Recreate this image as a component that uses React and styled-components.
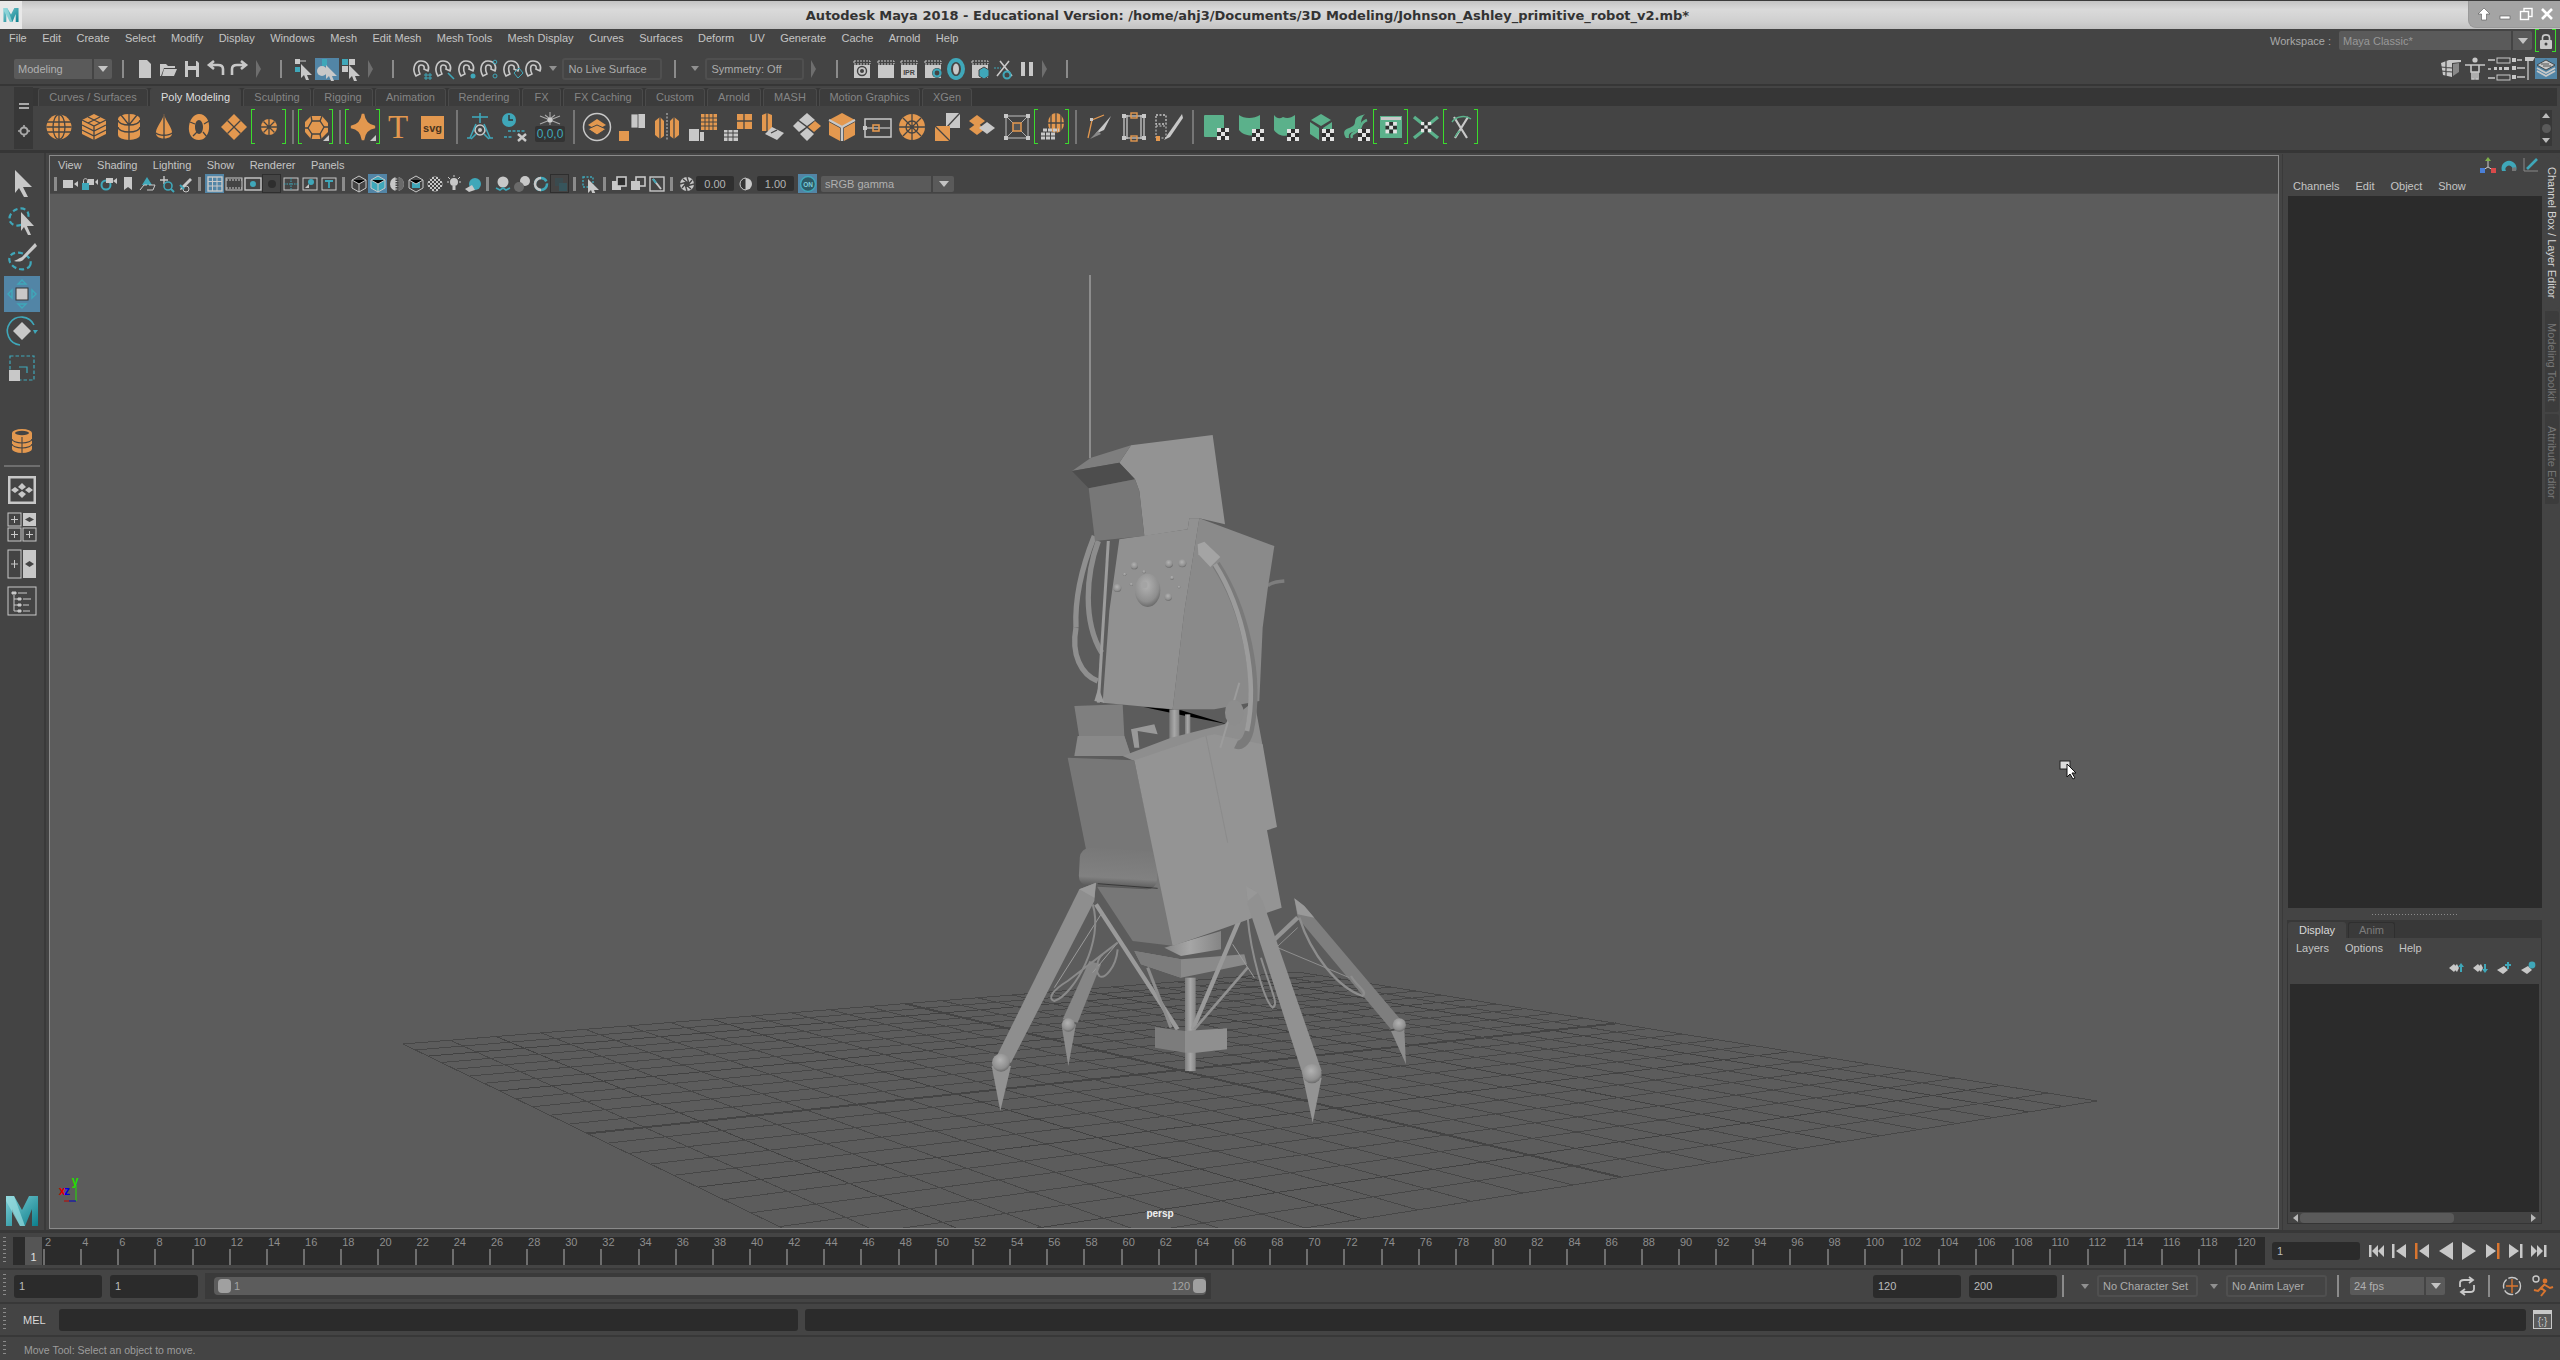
import React from 'react';
import styled, { createGlobalStyle } from 'styled-components';

const O = '#e3984f';
const W = '#c8c8c8';
const T = '#3fa7b9';
const G = '#5bb18b';
const D = '#444444';

const Global = createGlobalStyle`
  html, body { margin: 0; padding: 0; background: #444; }
  body { font-family: "Liberation Sans", Arial, sans-serif; font-size: 11px; color: #bdbdbd; }
  #root { width: 2560px; height: 1360px; overflow: hidden; }
`;

const Page = styled.div`
  width: 2560px;
  height: 1360px;
  display: flex;
  flex-direction: column;
  background: #444;
  overflow: hidden;
`;

/* title bar */
const TitleBar = styled.div`
  height: 28px;
  flex: none;
  border-top: 1px solid #3c3c3c;
  display: flex;
  align-items: center;
  justify-content: center;
  position: relative;
  background: linear-gradient(#c4c4c4, #dadada 30%, #cfcfcf 75%, #c2c2c2);
`;
const TitleText = styled.div`
  font-family: "DejaVu Sans", sans-serif;
  font-weight: bold;
  font-size: 13px;
  color: #333;
  margin-right: 65px;
`;
const AppLogo = styled.div`
  position: absolute;
  left: 0;
  top: 0;
  width: 22px;
  height: 28px;
  background: #e8e8e8;
  display: flex;
  align-items: center;
  justify-content: center;
`;
const WindowButtons = styled.div`
  position: absolute;
  right: 0;
  top: 0;
  height: 27px;
  width: 92px;
  display: flex;
  align-items: center;
  justify-content: space-around;
  padding: 0 2px 0 4px;
  box-sizing: border-box;
  border-left: 1px solid #999;
  border-bottom: 1px solid #999;
  border-bottom-left-radius: 8px;
  background: #a4a4a4;
`;

/* menu bar */
const MenuBar = styled.div`
  height: 21px;
  flex: none;
  box-sizing: border-box;
  padding: 0 0 3px 9px;
  display: flex;
  align-items: center;
`;
const MenuItem = styled.span`
  color: #c4c4c4;
  margin-right: ${p => p.$gap ?? 15.4}px;
  white-space: nowrap;
`;
const WorkspaceBox = styled.div`
  margin-left: auto;
  margin-right: 4px;
  padding-top: 5px;
  display: flex;
  align-items: center;
`;
const WorkspaceLabel = styled.span`
  font-size: 11px;
  color: #a8a8a8;
  margin-right: 8px;
`;

const Drop = styled.div`
  display: flex;
  width: ${p => p.$w}px;
  height: ${p => p.$h ?? 18}px;
  margin-left: ${p => p.$ml ?? 0}px;
  gap: 2px;
  flex: none;
`;
const DropText = styled.div`
  flex: 1;
  background: #5a5a5a;
  border-radius: 2px 0 0 2px;
  color: ${p => p.$c ?? '#b0b0b0'};
  font-size: 11px;
  display: flex;
  align-items: center;
  padding-left: 4px;
  overflow: hidden;
  white-space: nowrap;
`;
const DropArrow = styled.div`
  width: ${p => p.$w ?? 19}px;
  background: #5a5a5a;
  border-radius: 0 2px 2px 0;
  display: flex;
  align-items: center;
  justify-content: center;
  &::after {
    content: '';
    border-left: 5px solid transparent;
    border-right: 5px solid transparent;
    border-top: 6px solid #c4c4c4;
  }
`;

/* status line */
const StatusLine = styled.div`
  flex: none;
  padding: 3px 0 0 14px;
  display: flex;
  align-items: center;
  border-bottom: 2px solid #363636;
  box-sizing: border-box;
  height: 36px;
`;
const Sep = styled.div`
  flex: none;
  width: ${p => p.$w ?? 2}px;
  height: ${p => p.$h ?? 18}px;
  background: #8b8b8b;
  margin-left: ${p => p.$ml ?? 0}px;
  margin-right: ${p => p.$mr ?? 0}px;
`;
const Group = styled.div`
  display: flex;
  align-items: center;
  flex: none;
  margin-left: ${p => p.$ml ?? 0}px;
`;
const Slot = styled.div`
  flex: none;
  width: ${p => p.$w}px;
  height: ${p => p.$h ?? p.$w}px;
  margin-left: ${p => p.$ml ?? 0}px;
  display: flex;
  align-items: center;
  justify-content: center;
  background: ${p => (p.$on ? '#5285a6' : 'transparent')};
  box-shadow: ${p => (p.$sunken ? 'inset 0 0 0 1px #2e2e2e' : 'none')};
`;
const Collapse = styled.div`
  flex: none;
  margin-left: ${p => p.$ml}px;
  width: 0;
  height: 0;
  border-top: 9px solid transparent;
  border-bottom: 9px solid transparent;
  border-left: 5px solid #6e6e6e;
`;
const TinyDown = styled.div`
  flex: none;
  margin-left: ${p => p.$ml}px;
  width: 0;
  height: 0;
  border-left: 4px solid transparent;
  border-right: 4px solid transparent;
  border-top: 5px solid #909090;
`;
const OutlineBox = styled.div`
  flex: none;
  box-sizing: border-box;
  margin-left: ${p => p.$ml}px;
  width: ${p => p.$w}px;
  height: ${p => p.$h ?? 22}px;
  border: 2px solid #4f4f4f;
  border-radius: 3px;
  display: flex;
  align-items: center;
  padding-left: 4px;
  color: #acacac;
  white-space: nowrap;
  overflow: hidden;
`;
const RightIcons = styled.div`
  margin-left: auto;
  margin-right: 3px;
  display: flex;
  align-items: center;
  gap: 1px;
`;

/* shelf */
const ShelfArea = styled.div`
  height: 67px;
  flex: none;
  display: flex;
  border-bottom: 3px solid #363636;
  box-sizing: border-box;
  padding: 1px 3px 0 14px;
  position: relative;
`;
const ShelfSide = styled.div`
  width: 19px;
  height: 62px;
  background: #383838;
  display: flex;
  flex-direction: column;
  align-items: center;
  justify-content: space-around;
  padding: 6px 0;
  box-sizing: border-box;
  flex: none;
`;
const ShelfMain = styled.div`
  flex: 1;
  display: flex;
  flex-direction: column;
  min-width: 0;
`;
const TabStrip = styled.div`
  height: 18px;
  margin-top: 1px;
  background: #363636;
  display: flex;
  padding-left: 5px;
  align-items: flex-end;
`;
const ShelfTab = styled.div`
  box-sizing: border-box;
  width: ${p => p.$w}px;
  height: 18px;
  margin-right: 2px;
  border-radius: 3px 3px 0 0;
  background: ${p => (p.$on ? '#444' : '#3c3c3c')};
  border: 1px solid ${p => (p.$on ? '#444' : '#4a4a4a')};
  border-bottom: 0;
  color: ${p => (p.$on ? '#dedede' : '#858585')};
  font-size: 11px;
  text-align: center;
  line-height: 17px;
  white-space: nowrap;
`;
const ShelfRow = styled.div`
  display: flex;
  align-items: center;
  padding: 2px 0 0 8px;
  height: 37px;
`;
const ShelfSlot = styled.div`
  flex: none;
  width: ${p => p.$w ?? 35}px;
  height: ${p => p.$h ?? 35}px;
  margin-left: ${p => p.$ml ?? 0}px;
  display: flex;
  align-items: center;
  justify-content: center;
  position: relative;
  ${p =>
    p.$marked &&
    `&::before, &::after {
      content: '';
      position: absolute;
      top: 0;
      bottom: 0;
      width: 3px;
      border: 1px solid #3bdc2c;
    }
    &::before { left: 0; border-right: 0; }
    &::after { right: 0; border-left: 0; }`}
`;
const CornerMark = styled.span`
  position: absolute;
  right: 4px;
  bottom: 3px;
  border-left: 6px solid transparent;
  border-bottom: 6px solid #c8c8c8;
`;
const ShelfSep = styled.div`
  flex: none;
  width: 2px;
  height: 34px;
  background: #767676;
  margin: 0 4px 0 6px;
`;
const ShelfScroll = styled.div`
  position: absolute;
  right: 8px;
  top: 24px;
  width: 12px;
  height: 36px;
  background: #383838;
  display: flex;
  flex-direction: column;
  align-items: center;
  justify-content: space-between;
  padding: 3px 0;
  box-sizing: border-box;
`;
const ScrollDot = styled.div`
  width: 9px;
  height: 9px;
  border-radius: 50%;
  background: #5a5a5a;
`;
const Tri = styled.div`
  width: 0;
  height: 0;
  border-left: 4px solid transparent;
  border-right: 4px solid transparent;
  ${p => (p.$up ? 'border-bottom: 5px solid #bbb;' : 'border-top: 5px solid #bbb;')}
`;

/* middle */
const Middle = styled.div`
  flex: 1;
  display: flex;
  min-height: 0;
`;
const Toolbox = styled.div`
  width: 46px;
  flex: none;
  display: flex;
  flex-direction: column;
  align-items: center;
  border-right: 2px solid #3a3a3a;
  box-sizing: border-box;
  padding: 12px 0 0 0;
`;
const ToolSlot = styled.div`
  flex: none;
  width: 36px;
  height: 36px;
  margin-top: ${p => p.$mt ?? 1}px;
  margin-bottom: ${p => p.$mb ?? 0}px;
  background: ${p => (p.$on ? '#5285a6' : 'transparent')};
  display: flex;
  align-items: center;
  justify-content: center;
`;
const ToolRule = styled.div`
  width: 36px;
  height: 2px;
  background: #6e6e6e;
  flex: none;
  margin: 6px 0 8px;
`;
const LayoutSlot = styled.div`
  flex: none;
  width: 30px;
  height: 30px;
  margin-bottom: 7px;
`;
const LogoFoot = styled.div`
  margin-top: auto;
  margin-bottom: 3px;
  width: 34px;
  height: 32px;
`;

const ViewPane = styled.div`
  flex: none;
  width: 2230px;
  margin: 2px 0 1px 3px;
  border: 1px solid #8a8a8a;
  box-sizing: border-box;
  display: flex;
  flex-direction: column;
  background: #444;
`;
const PanelMenu = styled.div`
  height: 18px;
  display: flex;
  align-items: center;
  padding-left: 8px;
  flex: none;
`;
const PanelTools = styled.div`
  height: 19px;
  flex: none;
  display: flex;
  align-items: center;
  padding-left: 4px;
`;
const NumField = styled.div`
  flex: none;
  width: ${p => p.$w}px;
  height: 15px;
  background: #2f2f2f;
  border-radius: 2px;
  color: #b4b4b4;
  display: flex;
  align-items: center;
  justify-content: center;
  margin-right: ${p => p.$mr ?? 0}px;
`;
const Canvas = styled.div`
  flex: 1;
  position: relative;
  overflow: hidden;
  background: #5c5c5c;
  border-top: 1px solid #4b4b4b;
`;
const CanvasSvg = styled.svg`
  display: block;
`;
const CameraName = styled.span`
  position: absolute;
  left: 1094px;
  bottom: 9px;
  width: 32px;
  text-align: center;
  color: #f0f0f0;
  font-size: 10px;
  font-weight: bold;
`;

/* right dock */
const Dock = styled.div`
  flex: 1;
  display: flex;
  flex-direction: column;
  min-width: 0;
  margin: 1px 0 0 3px;
  padding: 0 3px 0 4px;
  border-left: 1px solid #3a3a3a;
  box-sizing: border-box;
`;
const DockIcons = styled.div`
  height: 22px;
  flex: none;
  display: flex;
  align-items: center;
  justify-content: flex-end;
  padding-right: 2px;
`;
const DockMenu = styled.div`
  height: 20px;
  flex: none;
  display: flex;
  align-items: center;
  padding-left: 6px;
  color: #b8b8b8;
`;
const DarkList = styled.div`
  background: #2b2b2b;
  flex: ${p => p.$flex ?? 'none'};
  height: ${p => (p.$h ? `${p.$h}px` : 'auto')};
  margin: ${p => p.$m ?? 0};
  min-height: 0;
`;
const GripDots = styled.div`
  height: 12px;
  flex: none;
  display: flex;
  align-items: center;
  justify-content: center;
  &::after {
    content: '';
    width: 86px;
    height: 1px;
    background: repeating-linear-gradient(90deg, #8a8a8a 0 1px, transparent 1px 3px);
  }
`;
const LayerTabs = styled.div`
  height: 18px;
  flex: none;
  background: #383838;
  display: flex;
  align-items: flex-end;
  padding-left: 1px;
  gap: 2px;
`;
const LayerTab = styled.div`
  box-sizing: border-box;
  width: ${p => p.$w}px;
  height: 16px;
  border-radius: 3px 3px 0 0;
  background: ${p => (p.$on ? '#444' : '#3a3a3a')};
  border: 1px solid ${p => (p.$on ? '#444' : '#2f2f2f')};
  border-bottom: 0;
  color: ${p => (p.$on ? '#d8d8d8' : '#7c7c7c')};
  text-align: center;
  line-height: 15px;
  font-size: 11px;
`;
const LayerBody = styled.div`
  flex: 1;
  display: flex;
  flex-direction: column;
  min-height: 0;
  border-left: 1px solid #353535;
  border-right: 1px solid #353535;
  border-bottom: 1px solid #353535;
  padding: 0 2px;
  margin-bottom: 6px;
`;
const LayerIcons = styled.div`
  height: 26px;
  box-sizing: border-box;
  padding: 0 2px 6px 0;
  flex: none;
  display: flex;
  align-items: center;
  justify-content: flex-end;
  gap: 7px;
`;
const HScroll = styled.div`
  height: 11px;
  flex: none;
  display: flex;
  align-items: center;
  padding: 0 3px;
  gap: 2px;
`;
const ArrowSide = styled.div`
  flex: none;
  width: 0;
  height: 0;
  border-top: 4px solid transparent;
  border-bottom: 4px solid transparent;
  ${p => (p.$left ? 'border-right: 5px solid #b8b8b8;' : 'border-left: 5px solid #b8b8b8;')}
`;
const HTrack = styled.div`
  flex: 1;
  height: 10px;
  display: flex;
`;
const HThumb = styled.div`
  width: 154px;
  height: 10px;
  border-radius: 4px;
  background: #5a5a5a;
`;
const VTabs = styled.div`
  flex: none;
  width: 15px;
  display: flex;
  flex-direction: column;
  padding-top: 4px;
  gap: 2px;
`;
const VTab = styled.div`
  box-sizing: border-box;
  height: ${p => p.$h}px;
  width: 14px;
  writing-mode: vertical-rl;
  background: ${p => (p.$on ? '#444' : '#3c3c3c')};
  color: ${p => (p.$on ? '#d4d4d4' : '#767676')};
  font-size: 11px;
  line-height: 14px;
  padding-top: ${p => p.$pt}px;
  border-radius: 0 3px 3px 0;
  white-space: nowrap;
`;

/* bottom rows */
const TimeRow = styled.div`
  height: 40px;
  flex: none;
  display: flex;
  align-items: center;
  padding-left: 13px;
  border-top: 3px solid #383838;
  border-bottom: 2px solid #383838;
  box-sizing: border-box;
  position: relative;
`;
const Grip = styled.div`
  position: absolute;
  left: 3px;
  top: 4px;
  bottom: 4px;
  width: 3px;
  background: repeating-linear-gradient(180deg, #8a8a8a 0 1px, transparent 1px 4px);
`;
const Ruler = styled.div`
  width: 2252px;
  height: 28px;
  flex: none;
  background: #2b2b2b;
  display: flex;
  padding-left: 30px;
  box-sizing: border-box;
  position: relative;
`;
const RulerNow = styled.div`
  position: absolute;
  left: 12px;
  top: 0;
  bottom: 0;
  width: 17px;
  background: #555;
  color: #e0e0e0;
  display: flex;
  align-items: flex-end;
  justify-content: center;
  padding-bottom: 2px;
  box-sizing: border-box;
`;
const Tick = styled.div`
  flex: none;
  width: 37.16px;
  height: 28px;
  display: flex;
  flex-direction: column;
  font-size: 11px;
  color: #8e8e8e;
`;
const TickLabel = styled.div`
  height: 12px;
  padding: 0 0 0 2px;
  line-height: 11px;
  white-space: nowrap;
`;
const TickMark = styled.div`
  width: 2px;
  height: 16px;
  background: #6e6e6e;
`;
const Field = styled.div`
  flex: none;
  box-sizing: border-box;
  width: ${p => p.$w ?? 88}px;
  height: ${p => p.$h ?? 23}px;
  margin-left: ${p => p.$ml ?? 0}px;
  background: #2b2b2b;
  border-radius: 3px;
  color: #bcbcbc;
  padding-left: ${p => p.$pl ?? 5}px;
  display: flex;
  align-items: center;
`;
const RangeRow = styled.div`
  height: 34px;
  flex: none;
  display: flex;
  align-items: center;
  padding: 0 0 0 14px;
  border-bottom: 2px solid #383838;
  box-sizing: border-box;
  position: relative;
`;
const RangeTrack = styled.div`
  flex: none;
  margin-left: 7px;
  width: 1006px;
  height: 26px;
  background: #3a3a3a;
  display: flex;
  align-items: center;
  padding: 0 5px 0 9px;
  box-sizing: border-box;
`;
const RangeBar = styled.div`
  flex: 1;
  height: 18px;
  background: #5c5c5c;
  border-radius: 4px;
  display: flex;
  align-items: center;
  padding: 0 0 0 4px;
  color: #a4a4a4;
`;
const RangeEnd = styled.span`
  margin-left: auto;
  margin-right: 3px;
`;
const RangeHandle = styled.div`
  width: 13px;
  height: 14px;
  border-radius: 4px;
  background: #a0a0a0;
  margin: ${p => p.$m};
`;
const CmdRow = styled.div`
  height: 33px;
  flex: none;
  display: flex;
  align-items: center;
  border-bottom: 2px solid #383838;
  box-sizing: border-box;
  position: relative;
  padding-left: 23px;
`;
const MelLabel = styled.span`
  width: 36px;
  flex: none;
  color: #d8d8d8;
`;
const HelpLine = styled.div`
  height: 23px;
  flex: none;
  box-sizing: border-box;
  display: flex;
  align-items: center;
  padding: 3px 0 0 24px;
  color: #9c9c9c;
  font-size: 10.5px;
  position: relative;
`;

/* little drawings */
const Ico = ({ s = 30, vb = 30, children }) => (
  <svg width={s} height={s} viewBox={`0 0 ${vb} ${vb}`} overflow="visible">
    {children}
  </svg>
);
const Checker = ({ x, y, c = 4, n = 3 }) => {
  const cells = [];
  for (let i = 0; i < n; i++)
    for (let j = 0; j < n; j++)
      cells.push(<rect key={`${i}-${j}`} x={x + i * c} y={y + j * c} width={c} height={c} fill={(i + j) % 2 ? '#2e2e2e' : '#e2e2e2'} />);
  return <g>{cells}</g>;
};
const ln = { stroke: D, strokeWidth: 1.3, fill: 'none' };

const shelfIcons = {
  sphere: <><circle cx="15" cy="15" r="12.5" fill={O} /><ellipse cx="15" cy="15" rx="6" ry="12.5" {...ln} /><path d="M3 10H27M2.5 15H27.5M3 20H27" {...ln} /><path d="M15 2.5V27.5" {...ln} /></>,
  cube: <><path d="M15 2L27 8V22L15 28L3 22V8Z" fill={O} /><path d="M3 8L15 14L27 8M15 14V28M3 13L15 19L27 13M3 18L15 24L27 18M9 5L21 11M21 5L9 11" {...ln} /></>,
  cylinder: <><path d="M4 7A11 5 0 0 1 26 7V23A11 5 0 0 1 4 23Z" fill={O} /><path d="M4 8A11 5 0 0 0 26 8M4 15A11 5 0 0 0 26 15M15 13V28M15 2V13M7 3L15 13L23 3" {...ln} /></>,
  cone: <><path d="M15 2C17 10 24 16 23 22C22 28 8 28 7 22C6 16 13 10 15 2Z" fill={O} /><path d="M15 3V27M7 21C10 24 20 24 23 21" {...ln} /></>,
  torus: <><path fillRule="evenodd" d="M15 2C22 2 26 9 25 17C24 25 19 28 15 28C8 28 4 22 5 14C6 7 10 2 15 2ZM15 8C12 8 11 12 11 15C11 19 13 22 15 22C18 22 19 18 19 15C19 11 17 8 15 8Z" fill={O} /><path d="M6 10L11 12M9 24L13 20M20 12L25 9M19 20L23 25" {...ln} /></>,
  plane: <><path d="M15 2L28 15L15 28L2 15Z" fill={O} /><path d="M8.5 8.5L21.5 21.5M21.5 8.5L8.5 21.5" {...ln} /></>,
  disc: <><circle cx="15" cy="15" r="8" fill={O} /><path d="M7 15H23M15 7V23M9.5 9.5L20.5 20.5M20.5 9.5L9.5 20.5" {...ln} /></>,
  platonic: <><path d="M10 4H21L27 11V20L20 27H10L4 20V10Z" fill={O} /><path d="M11 9H19L23 15L19 22H11L7 16Z" {...ln} /><path d="M10 4L11 9M21 4L19 9M27 15H23M10 27L11 22M20 27L19 22M4 16H7" {...ln} /></>,
  star: <path d="M15 2C16 10 20 14 27 15C20 16 16 20 15 28C14 20 10 16 3 15C10 14 14 10 15 2Z" fill={O} stroke={O} strokeWidth="2.5" />,
  text: <text x="15" y="26" textAnchor="middle" fontFamily="Liberation Serif, serif" fontSize="33" fill={O}>T</text>,
  svg: <><rect x="3" y="4" width="23" height="23" fill={O} /><text x="14.5" y="20" textAnchor="middle" fontFamily="Liberation Sans, sans-serif" fontWeight="bold" fontSize="11" fill="#4a3420">svg</text></>,
  constr: <><path d="M15 1V11" stroke={T} strokeWidth="1.6" /><path d="M7 5H23" stroke={T} strokeWidth="1.6" /><circle cx="15" cy="18" r="5" fill="none" stroke={W} strokeWidth="1.6" /><circle cx="15" cy="18" r="2" fill={W} /><path d="M11 12L5 26H2M19 12L25 26H28M11 22L6 27M19 22L24 27" stroke={T} strokeWidth="1.6" fill="none" /></>,
  delHist: <><circle cx="9" cy="8" r="7" fill={T} /><path d="M9 3V8H13" stroke="#333" strokeWidth="1.4" fill="none" /><path d="M8 19H25M4 25H12" stroke={T} strokeWidth="1.5" strokeDasharray="3 1.5" /><path d="M18 22L26 29M26 22L18 29" stroke={W} strokeWidth="2.4" /></>,
  freeze: <><path d="M15 0V13M10 3L15 7L20 3M5 4L25 12M25 4L5 12" stroke="#aaa" strokeWidth="1.1" fill="none" /><circle cx="15" cy="8" r="2.6" fill="#ccc" /><rect x="0" y="14" width="30" height="16" rx="2" fill="#333" /><text x="15" y="26" textAnchor="middle" fontFamily="Liberation Sans, sans-serif" fontSize="12" fill={T}>0,0,0</text></>,
  combine: <><circle cx="15" cy="15" r="13.5" fill="none" stroke={W} strokeWidth="1.5" /><path d="M15 7L24 13L15 18L6 13Z" fill={O} /><path d="M6 17L15 23L24 17L15 13Z" fill={O} stroke={D} strokeWidth="1" /></>,
  separate: <><rect x="14" y="2" width="14" height="14" fill={W} /><path d="M14 2H21V16H14Z" fill={W} stroke={D} strokeWidth="0.8" /><rect x="2" y="19" width="10" height="10" fill={O} /></>,
  mirror: <><path d="M3 9L8 5L12 9V24L8 27L3 23Z" fill={O} /><path d="M18 9L22 5L27 9V23L22 27L18 24Z" fill={O} /><path d="M8 5V27M22 5V27" {...ln} /><path d="M15 1V29" stroke={W} strokeWidth="1" strokeDasharray="2 1.5" /></>,
  smoothUp: <><rect x="14" y="2" width="16" height="16" fill={O} /><path d="M14 6H30M14 10H30M14 14H30M18 2V18M22 2V18M26 2V18" {...ln} strokeWidth="1" /><rect x="2" y="17" width="10" height="12" fill={W} /><rect x="13" y="20" width="4" height="9" fill={W} /></>,
  reduce: <><rect x="15" y="2" width="15" height="15" fill={O} /><path d="M22 2V17M15 9H30" {...ln} /><rect x="2" y="18" width="14" height="11" fill={W} /><path d="M2 21H16M2 25H16M6 18V29M11 18V29" {...ln} strokeWidth="1" /></>,
  extrude: <><path d="M5 3L10 1L15 3V19H5Z" fill={O} /><path d="M10 1V19" {...ln} /><path d="M15 15L27 21L20 28L8 22Z" fill={W} /><path d="M14 21L20 18" {...ln} /></>,
  bridge: <><path d="M15 1L23 8L15 14L7 8Z" fill={W} /><path d="M6 9L14 15L7 20L1 14Z" fill={W} /><path d="M23 9L29 14L22 20L16 15Z" fill={O} /><path d="M15 16L22 22L15 29L8 22Z" fill={W} /></>,
  bevel: <><path d="M15 1L28 8L15 15L2 8Z" fill={O} /><path d="M2 10L13 16V29L2 23Z" fill={O} /><path d="M28 10L17 16V29L28 23Z" fill={O} /><path d="M15 15V29" stroke={W} strokeWidth="2.5" /><path d="M2 8L15 15L28 8" stroke={W} strokeWidth="2" fill="none" /></>,
  fill: <><rect x="3" y="7" width="26" height="18" fill="none" stroke={W} strokeWidth="1.5" /><path d="M4 16H28" stroke={W} strokeWidth="1.2" /><rect x="11" y="13" width="6" height="6" fill="none" stroke={O} strokeWidth="1.6" /><rect x="1" y="14" width="4" height="4" fill={W} /></>,
  cut: <><circle cx="15" cy="15" r="13" fill={O} /><circle cx="15" cy="15" r="6" {...ln} /><path d="M2 15H28M15 2V28M6 6L24 24M24 6L6 24" {...ln} /></>,
  wedge: <><path d="M14 1H28V16H14Z" fill={W} /><path d="M14 16L28 1" {...ln} /><path d="M3 14L18 14V29H3Z" fill={O} /><path d="M3 14L18 29" {...ln} /></>,
  circ: <><path d="M10 3L18 9L10 15L2 9Z" fill={O} /><path d="M10 11L18 17L10 23L2 17Z" fill={O} /><path d="M20 10L28 16L20 22L12 16Z" fill={W} /></>,
  poke: <><rect x="4" y="4" width="22" height="22" fill="none" stroke="#aaa" strokeWidth="1.2" /><path d="M5 5L25 25M25 5L5 25" stroke="#aaa" strokeWidth="1" /><rect x="11" y="11" width="8" height="8" fill="#555" stroke={O} strokeWidth="1.5" /><rect x="2" y="2" width="4" height="4" fill={W} /><rect x="24" y="2" width="4" height="4" fill={W} /><rect x="2" y="24" width="4" height="4" fill={W} /><rect x="24" y="24" width="4" height="4" fill={W} /></>,
  wedgeSphere: <><ellipse cx="19" cy="11" rx="8" ry="10" fill={O} /><path d="M11 11H27M19 1V21M14 3V19M24 3V19" {...ln} /><path d="M6 18H22M4 22H18M4 26H18" stroke={W} strokeWidth="3" strokeDasharray="4 1" /></>,
  knife: <><path d="M4 26L8 8L20 3" stroke={O} strokeWidth="1.3" fill="none" /><rect x="6" y="6" width="3" height="3" fill={W} /><path d="M27 4L13 20L6 27L11 22L20 18Z" fill={W} /><path d="M6 27L14 19L17 22Z" fill="#888" /></>,
  multicut: <><rect x="5" y="4" width="20" height="22" fill="none" stroke={W} strokeWidth="1.3" /><path d="M8 3V27M22 3V27" stroke={W} strokeWidth="1.3" /><rect x="12" y="1" width="6" height="5" fill="none" stroke={O} strokeWidth="1.4" /><rect x="12" y="24" width="6" height="5" fill="none" stroke={O} strokeWidth="1.4" /><rect x="3" y="2" width="4" height="4" fill={W} /><rect x="23" y="2" width="4" height="4" fill={W} /><rect x="3" y="24" width="4" height="4" fill={W} /><rect x="23" y="24" width="4" height="4" fill={W} /></>,
  sculpt: <><rect x="2" y="3" width="10" height="9" fill="none" stroke={W} strokeDasharray="2 1.5" strokeWidth="1.3" /><rect x="2" y="14" width="10" height="12" fill="none" stroke={W} strokeDasharray="2 1.5" strokeWidth="1" /><path d="M28 2L14 22L10 28L16 25L29 6Z" fill={W} /><rect x="2" y="24" width="4" height="5" fill={O} /></>,
  uvPlane: <><rect x="3" y="3" width="20" height="22" rx="1" fill={G} /><Checker x={16} y={16} /></>,
  uvCyl: <><path d="M3 3C8 7 18 7 24 3V20C22 25 8 25 3 18Z" fill={G} /><Checker x={16} y={17} /></>,
  uvSph: <><path d="M3 3C6 7 9 7 12 5C16 7 20 6 24 3V19C20 25 8 26 3 18Z" fill={G} /><Checker x={16} y={17} /></>,
  uvCube: <><path d="M15 2L25 8L15 14L5 8Z" fill={G} /><path d="M4 10L13 16V28L4 22Z" fill={G} /><path d="M17 16L26 10V18H17Z" fill={G} /><Checker x={16} y={17} /></>,
  uvWave: <><path d="M5 26C-2 14 14 18 14 10C14 4 20 4 24 2C18 8 22 10 18 16C14 22 7 18 8 26Z" fill={G} /><path d="M11 26C8 20 18 22 20 14C21 10 26 8 26 8" stroke={G} strokeWidth="2.5" fill="none" /><Checker x={17} y={17} /></>,
  uvEditor: <><rect x="4" y="4" width="22" height="22" fill={G} /><rect x="5" y="5" width="20" height="3" fill={W} /><Checker x={9.5} y={10} c={3.8} /></>,
  uvLayout: <><path d="M3 5L13 13M27 5L17 13M3 26L13 18M27 26L17 18" stroke={G} strokeWidth="3.4" /><Checker x={10} y={10} c={3.4} /></>,
  uvCut: <><path d="M8 5L21 26M22 5L9 26" stroke={W} strokeWidth="2.2" /><path d="M6 10C10 4 20 3 25 7M9 25C11 23 10 21 14 19" stroke={G} strokeWidth="1.4" fill="none" /></>,
};

const shelf = [
  ['sphere'], ['cube'], ['cylinder'], ['cone'], ['torus'], ['plane'], ['disc', 1], '|',
  ['platonic', 1, 1], '|',
  ['star', 1, 1], ['text'], ['svg'], '|',
  ['constr'], ['delHist'], ['freeze'], '|',
  ['combine'], ['separate'], ['mirror'], ['smoothUp'], ['reduce'], ['extrude'], ['bridge'], ['bevel'], ['fill'], ['cut'], ['wedge'], ['circ'], ['poke'], ['wedgeSphere', 1], '|',
  ['knife'], ['multicut'], ['sculpt'], '|',
  ['uvPlane'], ['uvCyl'], ['uvSph'], ['uvCube'], ['uvWave'], ['uvEditor', 1], ['uvLayout'], ['uvCut', 1],
];

const tabs = [
  ['Curves / Surfaces', 110], ['Poly Modeling', 91, 1], ['Sculpting', 68], ['Rigging', 60], ['Animation', 71], ['Rendering', 72], ['FX', 39], ['FX Caching', 80], ['Custom', 60], ['Arnold', 54], ['MASH', 54], ['Motion Graphics', 101], ['XGen', 50],
];

const menus = ['File', 'Edit', 'Create', 'Select', 'Modify', 'Display', 'Windows', 'Mesh', 'Edit Mesh', 'Mesh Tools', 'Mesh Display', 'Curves', 'Surfaces', 'Deform', 'UV', 'Generate', 'Cache', 'Arnold', 'Help'];

const Magnet = ({ children }) => (
  <Ico s={22} vb={22}>
    <path d="M5 18C1 12 3 3 10 3C16 3 19 8 17 13L13 11C14 8 12 7 10 7C7 7 7 12 9 16Z" fill="none" stroke={W} strokeWidth="1.6" />
    {children}
  </Ico>
);

const statusFile = [
  <Ico s={20} vb={20}><path d="M4 1H12L16 5V19H4Z" fill={W} /></Ico>,
  <Ico s={20} vb={20}><path d="M2 5H8L10 7H17V9H6L3 17H2ZM6 10H19L16 17H4Z" fill={W} /></Ico>,
  <Ico s={20} vb={20}><path d="M3 2H15L17 4V18H3Z" fill={W} /><rect x="6" y="2" width="8" height="5" fill={D} /><rect x="6" y="11" width="8" height="7" fill={D} /></Ico>,
  <Ico s={20} vb={20}><path d="M17 16V10C17 7 15 6 12 6H5M8 2L3 6L8 10" fill="none" stroke={W} strokeWidth="2.6" /></Ico>,
  <Ico s={20} vb={20}><path d="M3 16V10C3 7 5 6 8 6H15M12 2L17 6L12 10" fill="none" stroke={W} strokeWidth="2.6" /></Ico>,
];
const Arrowish = ({ x = 9, y = 6, f = W }) => <path d={`M${x} ${y}L${x + 11} ${y + 11}H${x + 6}L${x + 8} ${y + 16}H${x + 5}L${x + 3} ${y + 11}L${x} ${y + 14}Z`} fill={f} />;
const statusSel = [
  <Ico s={22} vb={22}><rect x="2" y="1" width="5" height="5" fill={W} /><rect x="2" y="9" width="5" height="5" fill={T} /><path d="M7 3H13" stroke={W} /><Arrowish x={8} y={6} /></Ico>,
  <Ico s={22} vb={22}><rect x="6" y="1" width="5" height="7" fill={T} /><circle cx="6" cy="13" r="5" fill={W} /><Arrowish x={10} y={7} /></Ico>,
  <Ico s={22} vb={22}><rect x="2" y="1" width="6" height="6" fill={T} /><rect x="9" y="1" width="6" height="6" fill={W} /><rect x="2" y="8" width="6" height="6" fill={W} /><Arrowish x={9} y={7} /></Ico>,
];
const Clap = ({ children }) => (
  <Ico s={22} vb={22}>
    <rect x="3" y="3" width="16" height="3" fill="none" stroke={W} strokeWidth="1" strokeDasharray="2 1" />
    <rect x="3" y="7" width="16" height="13" fill={W} />
    {children}
  </Ico>
);
const statusRender = [
  <Clap><circle cx="11" cy="13" r="4.5" fill="none" stroke={D} strokeWidth="1.4" /><circle cx="11" cy="13" r="2" fill={D} /></Clap>,
  <Clap />,
  <Clap><text x="11" y="17" textAnchor="middle" fontFamily="Liberation Sans, sans-serif" fontSize="7" fontWeight="bold" fill={D}>IPR</text></Clap>,
  <Clap><circle cx="15" cy="15" r="5" fill={D} /><circle cx="15" cy="15" r="3.5" fill="none" stroke={T} strokeWidth="2.2" /></Clap>,
  <Ico s={22} vb={22}><ellipse cx="11" cy="11" rx="7" ry="9" fill="none" stroke={T} strokeWidth="4" /><ellipse cx="11" cy="11" rx="3" ry="5.5" fill={W} /></Ico>,
  <Clap><path d="M15 9L20 12V18L15 21L10 18V12Z" fill={T} stroke={D} /></Clap>,
  <Ico s={22} vb={22}><path d="M5 18L17 3M8 3L20 18" stroke={W} strokeWidth="1.6" /><path d="M2 10H9" stroke={T} strokeDasharray="2 1" /><circle cx="15" cy="17" r="3.5" fill="none" stroke={T} strokeWidth="2" /></Ico>,
  <Ico s={22} vb={22}><rect x="5" y="4" width="4" height="14" fill={W} /><rect x="13" y="4" width="4" height="14" fill={W} /></Ico>,
];
const statusRight = [
  <Ico s={24} vb={24}><path d="M2 6L10 3L22 3L22 5L13 6V20L4 18Z" fill={W} /><path d="M7 4V19M2 10L13 11M2 14L13 15" stroke={D} strokeWidth="1.2" /><path d="M14 7L20 6V15L14 19Z" fill="#888" /></Ico>,
  <Ico s={24} vb={24}><circle cx="12" cy="3" r="2.6" fill={W} /><path d="M2 8H22M8 8H16V15H8ZM9 15V22H11V15M13 15V22H15V15" stroke={W} strokeWidth="1.6" fill="none" /></Ico>,
  <Ico s={24} vb={24}><path d="M1 3H8M1 21H8M1 12H4" stroke={W} strokeWidth="1.3" /><rect x="10" y="1" width="13" height="5" fill="none" stroke={W} /><rect x="10" y="18" width="13" height="5" fill="none" stroke={W} /><rect x="7" y="10" width="3" height="3" fill={W} /><rect x="12" y="10" width="3" height="3" fill={W} /><rect x="17" y="10" width="5" height="3" fill={W} /></Ico>,
  <Ico s={24} vb={24}><rect x="1" y="1" width="4" height="4" fill={W} /><rect x="1" y="9" width="4" height="4" fill={W} /><rect x="1" y="18" width="4" height="4" fill={W} /><path d="M6 3H11M6 11H14M6 20H14M17 3V23" stroke={W} strokeWidth="1.3" /><path d="M14 0H24L22 4H14Z" fill={W} /></Ico>,
];
const LayersGlyph = ({ s = 20 }) => (
  <Ico s={s} vb={20}>
    <path d="M10 1L19 6L10 11L1 6Z" fill={W} stroke="#333" strokeWidth=".8" />
    <path d="M1 9L10 14L19 9M1 12L10 17L19 12" fill="none" stroke={W} strokeWidth="1.8" />
    <path d="M5 5H13M7 7H15" stroke="#333" strokeWidth=".8" />
  </Ico>
);

const vpIcons = {
  cam: <><rect x="1" y="5" width="10" height="8" fill={W} /><path d="M12 9L16 6V12Z" fill={W} /></>,
  camLock: <><rect x="7" y="4" width="6" height="6" fill={W} /><path d="M14 7L17 4V10Z" fill={W} /><rect x="1" y="8" width="7" height="7" fill={T} /><path d="M2.5 8V5.5C2.5 3 6.5 3 6.5 5.5V8" stroke={W} fill="none" /></>,
  camGear: <><circle cx="6" cy="10" r="4.5" fill="none" stroke={T} strokeWidth="2" /><rect x="6" y="3" width="7" height="5" fill={W} /><path d="M13 6L17 3V9Z" fill={W} /></>,
  mark: <path d="M5 2H13V15L9 12L5 15Z" fill={W} />,
  grid2: <><path d="M9 2L14 10H4Z" fill={T} /><path d="M2 15L6 10H9M9 15H15L17 10H11" stroke={W} fill="none" /></>,
  move: <><path d="M7 1V9M3 5H11" stroke={W} strokeWidth="1.4" /><circle cx="11" cy="11" r="4" fill="none" stroke={T} strokeWidth="1.6" /><path d="M14 14L17 17" stroke={T} strokeWidth="2" /></>,
  pen: <><path d="M14 3L5 12L4 15L7 14L16 5Z" fill={W} /><circle cx="10" cy="14" r="3" fill="none" stroke={W} /><path d="M4 10L8 14" stroke={T} strokeWidth="2" /></>,
  grid: <><rect x="2" y="2" width="14" height="14" fill="none" stroke={W} strokeWidth="1.4" /><path d="M6.5 2V16M11 2V16M2 6.5H16M2 11H16" stroke={W} /></>,
  film: <><rect x="1" y="3" width="16" height="12" fill="none" stroke={W} /><path d="M1 5H17M1 13H17" stroke={W} strokeDasharray="2 1" /></>,
  dot: <><rect x="1" y="3" width="16" height="12" fill="none" stroke={W} strokeWidth="1.4" /><circle cx="9" cy="9" r="3" fill={T} /></>,
  dotOff: <><circle cx="9" cy="9" r="4" fill="#2e2e2e" /></>,
  safe: <><rect x="2" y="3" width="14" height="12" fill="none" stroke={W} /><path d="M2 9H16M9 3V15" stroke={T} strokeDasharray="1.5 1" /></>,
  res: <><rect x="2" y="3" width="14" height="12" fill="none" stroke={W} /><circle cx="10" cy="7" r="3" fill={T} /><path d="M4 13L8 9V13Z" fill={W} /></>,
  textbox: <><rect x="2" y="3" width="14" height="12" fill="none" stroke={W} /><path d="M5 6H13M9 6V13" stroke={T} strokeWidth="1.8" /></>,
  wire: <><path d="M9 1L16 5V13L9 17L2 13V5Z" fill="none" stroke={W} /><path d="M2 5L9 9L16 5M9 9V17" stroke={W} /></>,
  shaded: <><path d="M9 1L16 5V13L9 17L2 13V5Z" fill={T} stroke={W} /><path d="M2 5L9 9L16 5M9 9V17" stroke={W} /></>,
  half: <><circle cx="9" cy="9" r="7" fill={W} /><path d="M9 2A7 7 0 0 1 9 16Z" fill="#6a6a6a" /><path d="M9 2V16" stroke={D} strokeDasharray="1.5 1" strokeWidth="3" /></>,
  texBox: <><path d="M9 1L16 5V13L9 17L2 13V5Z" fill="none" stroke={W} /><path d="M5 7L13 7L13 13L5 13Z" fill={T} /><path d="M2 5L9 9L16 5" stroke={W} /></>,
  chk: <><circle cx="9" cy="9" r="7.5" fill={W} /><path d="M2 5H16M2 9H16M2 13H16M5 2V16M9 2V16M13 2V16" stroke={D} strokeDasharray="2 2" strokeWidth="2" /></>,
  bulb: <><circle cx="9" cy="7" r="4" fill={W} /><rect x="7.5" y="11" width="3" height="4" fill={W} /><path d="M9 0V2M2 7H4M14 7H16M3 2L5 4M15 2L13 4" stroke={W} /></>,
  ball: <><circle cx="11" cy="9" r="6" fill={T} /><path d="M1 14L8 10L11 15L5 17Z" fill={W} /></>,
  shadow: <><circle cx="9" cy="7" r="5.5" fill={W} /><path d="M2 13L6 15L9 13L12 15L16 13" stroke={T} fill="none" strokeWidth="1.6" /></>,
  ao: <><circle cx="12" cy="6" r="5" fill={W} /><circle cx="6" cy="12" r="5" fill="#6a6a6a" /></>,
  ring: <><circle cx="9" cy="9" r="6" fill="none" stroke={T} strokeWidth="2.5" strokeDasharray="16 2" /><path d="M9 3A6 6 0 0 0 9 15" fill="none" stroke={W} strokeWidth="2.5" /></>,
  blocks: <><rect x="4" y="3" width="8" height="8" fill="#3a4a4e" /><rect x="8" y="8" width="8" height="8" fill="#37555c" /></>,
  xray: <><rect x="2" y="2" width="10" height="10" fill="none" stroke={T} strokeDasharray="2 1.5" strokeWidth="1.4" /><Arrowish x={7} y={4} /></>,
  squares: <><rect x="2" y="6" width="9" height="9" fill={W} /><rect x="7" y="2" width="9" height="9" fill="#2e2e2e" stroke={W} strokeWidth="1.6" /></>,
  squares2: <><rect x="2" y="6" width="9" height="9" fill={W} /><rect x="7" y="2" width="9" height="9" fill="none" stroke={W} strokeWidth="1.6" /></>,
  wand: <><rect x="2" y="2" width="14" height="14" fill="none" stroke={W} strokeWidth="1.4" /><path d="M5 4L13 14" stroke={W} strokeWidth="2" /><path d="M5 4L8 8" stroke={T} strokeWidth="2" /></>,
  iris: <><circle cx="9" cy="9" r="7" fill={W} /><path d="M9 2L11 9L5 4M16 9L9 11L14 5M9 16L7 9L13 14M2 9L9 7L4 13" stroke={D} strokeWidth="1.4" fill="none" /><circle cx="9" cy="9" r="2" fill={D} /></>,
  gammaIco: <><path d="M9 3A6 6 0 0 0 9 15Z" fill="#333" stroke={W} /><path d="M9 3A6 6 0 0 1 9 15Z" fill={W} /></>,
  on: <><circle cx="9" cy="9" r="7.5" fill="#2d5a66" stroke={T} strokeWidth="1.5" /><text x="9" y="11.5" textAnchor="middle" fontFamily="Liberation Sans, sans-serif" fontSize="6.5" fontWeight="bold" fill="#7fd0dc">ON</text></>,
};
const VP = ({ n, on, sunken, w = 19 }) => (
  <Slot $w={w} $h={19} $on={on} $sunken={sunken}>
    <Ico s={18} vb={18}>{vpIcons[n]}</Ico>
  </Slot>
);

const playback = [
  <><rect x="3" y="5" width="2.5" height="12" fill={W} /><path d="M6 11L12 5V17ZM12 11L18 5V17Z" fill={W} /></>,
  <><rect x="3" y="4" width="2.5" height="14" fill={W} /><path d="M7 11L17 4V18Z" fill={W} /></>,
  <><rect x="3" y="3" width="2.5" height="16" fill="#d9752f" /><path d="M7 11L17 4V18Z" fill={W} /></>,
  <path d="M4 11L18 2V20Z" fill={W} />,
  <path d="M4 2L18 11L4 20Z" fill={W} />,
  <><path d="M4 4L14 11L4 18Z" fill={W} /><rect x="15" y="3" width="2.5" height="16" fill="#d9752f" /></>,
  <><path d="M4 4L14 11L4 18Z" fill={W} /><rect x="15" y="4" width="2.5" height="14" fill={W} /></>,
  <><path d="M3 5L9 11L3 17ZM9 5L15 11L9 17Z" fill={W} /><rect x="16" y="5" width="2.5" height="12" fill={W} /></>,
];

const MayaM = ({ w, h, id }) => (
  <svg width={w} height={h} viewBox="0 0 34 32">
    <defs>
      <linearGradient id={id} x1="0" y1="0" x2="1" y2="1">
        <stop offset="0" stopColor="#7fcfd6" />
        <stop offset="1" stopColor="#0c7f8c" />
      </linearGradient>
    </defs>
    <path d="M1 1H9L17 15L24 1H33V31H27V14L20 31H15L7 14V31H1Z" fill={`url(#${id})`} />
    <path d="M1 1H9L20 31H15L1 6Z" fill="#9bdde0" opacity=".7" />
  </svg>
);

/* perspective grid: homography from the unit square to the four screen corners */
const corner = { L: [402, 1043], B: [1297, 971], R: [2096, 1100], F: [911, 1290] };
const project = () => {
  const [x0, y0] = corner.L;
  const [x1, y1] = corner.B;
  const [x2, y2] = corner.R;
  const [x3, y3] = corner.F;
  const dx1 = x1 - x2, dx2 = x3 - x2, sx = x0 - x1 + x2 - x3;
  const dy1 = y1 - y2, dy2 = y3 - y2, sy = y0 - y1 + y2 - y3;
  const det = dx1 * dy2 - dx2 * dy1;
  const g = (sx * dy2 - dx2 * sy) / det;
  const h = (dx1 * sy - sx * dy1) / det;
  const a = x1 - x0 + g * x1, b = x3 - x0 + h * x3;
  const d = y1 - y0 + g * y1, e = y3 - y0 + h * y3;
  return (u, v) => {
    const w = g * u + h * v + 1;
    return [(a * u + b * v + x0) / w, (d * u + e * v + y0) / w];
  };
};
const Grid = () => {
  const P = project();
  const lines = [];
  for (let i = 0; i <= 24; i++) {
    const t = i / 24;
    const major = (i - 12) % 5 === 0;
    const axis = i === 12;
    const stroke = axis ? '#444' : major ? '#424242' : '#474747';
    const sw = axis ? 2 : 1;
    const a1 = P(t, 0), a2 = P(t, 1), b1 = P(0, t), b2 = P(1, t);
    lines.push(<line key={`u${i}`} x1={a1[0]} y1={a1[1]} x2={a2[0]} y2={a2[1]} stroke={stroke} strokeWidth={sw} />);
    lines.push(<line key={`v${i}`} x1={b1[0]} y1={b1[1]} x2={b2[0]} y2={b2[1]} stroke={stroke} strokeWidth={sw} />);
  }
  return <g shapeRendering="crispEdges">{lines}</g>;
};

const Robot = () => (
  <>
    <defs>
      <linearGradient id="cyl" x1="0" y1="0" x2="0" y2="1">
        <stop offset="0" stopColor="#787878" />
        <stop offset=".75" stopColor="#818181" />
        <stop offset="1" stopColor="#585858" />
      </linearGradient>
      <linearGradient id="pole" x1="0" y1="0" x2="1" y2="0">
        <stop offset="0" stopColor="#7d7d7d" />
        <stop offset=".5" stopColor="#a8a8a8" />
        <stop offset="1" stopColor="#858585" />
      </linearGradient>
      <radialGradient id="ball" cx=".45" cy=".35" r=".75">
        <stop offset="0" stopColor="#b2b2b2" />
        <stop offset=".65" stopColor="#8e8e8e" />
        <stop offset="1" stopColor="#555" />
      </radialGradient>
      <linearGradient id="neck" x1="0" y1="0" x2="1" y2="0">
        <stop offset="0" stopColor="#868686" />
        <stop offset=".45" stopColor="#a6a6a6" />
        <stop offset="1" stopColor="#858585" />
      </linearGradient>
    </defs>

    {/* upper half, coordinates from the 3x crop at 980,260 */}
    <g transform="translate(980 260) scale(.33333)">
      <rect x="324" y="42" width="6" height="550" fill="#8d8d8d" />
      <path d="M285 1100C270 1180 300 1240 350 1260" fill="none" stroke="#8f8f8f" strokeWidth="16" />
      <path d="M340 825C310 900 280 1000 285 1100" fill="none" stroke="#8f8f8f" strokeWidth="16" />
      <path d="M352 840C315 940 305 1080 362 1175" fill="none" stroke="#8d8d8d" strokeWidth="16" />
      <path d="M860 975C868 965 885 962 910 960" fill="none" stroke="#7d7d7d" strokeWidth="10" />
      <polygon points="655,772 880,855 860,985 845,1100 835,1320 700,1345 575,1345 610,1050" fill="#8a8a8a" />
      <polygon points="415,835 620,805 625,772 655,772 610,1050 575,1345 365,1325 385,1050" fill="#919191" />
      <path d="M382 840L352 1325" stroke="#9c9c9c" strokeWidth="9" />
      <polygon points="340,1320 352,1280 370,1325" fill="#9c9c9c" />
      <polygon points="450,553 695,522 732,790 655,772 625,772 620,805 490,825 475,690 462,655 415,605" fill="#939393" />
      <polygon points="273,630 330,590 450,553 415,605" fill="#7e7e7e" />
      <polygon points="273,630 415,605 462,655 323,682" fill="#4d4d4d" />
      <polygon points="323,682 462,655 475,690 490,825 342,840" fill="#777" />
      <polygon points="488,1338 600,1348 740,1390 600,1362" fill="#000" />
      <rect x="565" y="1345" width="30" height="110" fill="url(#pole)" />
      <rect x="612" y="1360" width="16" height="80" fill="url(#pole)" />
      <ellipse cx="500" cy="988" rx="38" ry="50" fill="url(#ball)" />
      <circle cx="490" cy="972" r="10" fill="#a4a4a4" />
      {[[460, 914, 11], [431, 940, 5], [489, 932, 5], [409, 981, 12], [451, 970, 5], [564, 908, 12], [604, 907, 12], [573, 950, 6], [594, 978, 4], [562, 1008, 11]].map(([cx, cy, r]) => (
        <circle key={`${cx}-${cy}`} cx={cx} cy={cy} r={r} fill="url(#ball)" />
      ))}
    </g>

    {/* lower half, coordinates from the 3x crop at 960,700 */}
    <g transform="translate(960 700) scale(.33333)">
      <polygon points="1000,592 1030,615 1335,975 1290,985 1010,650" fill="#7e7e7e" />
      <polygon points="1000,592 1030,615 1060,650 1010,640" fill="#999" />
      <path d="M1015 650C1050 760 1130 860 1205 885C1220 870 1190 860 1170 825" fill="none" stroke="#8d8d8d" strokeWidth="7" />
      <path d="M950 740L1165 830M1010 680L940 745" stroke="#8f8f8f" strokeWidth="3" />
      <path d="M1010 650L930 725" stroke="#939393" strokeWidth="13" />
      <polygon points="1290,990 1330,985 1335,1090" fill="#8c8c8c" />
      <circle cx="1315" cy="972" r="20" fill="url(#ball)" />

      <polygon points="385,780 420,790 350,965 305,955" fill="#868686" />
      <polygon points="303,980 345,970 322,1095" fill="#8c8c8c" />
      <circle cx="322" cy="972" r="20" fill="url(#ball)" />

      <polygon points="520,750 660,775 850,760 858,790 660,830 540,790" fill="#8a8a8a" />
      <polygon points="520,750 660,775 660,830 540,790" fill="#7c7c7c" />
      <rect x="672" y="830" width="32" height="280" fill="url(#pole)" />
      <polygon points="610,740 780,690 780,745 660,765" fill="url(#neck)" />

      <path d="M405 610L650 985" stroke="#9a9a9a" strokeWidth="13" />
      <path d="M560 800L630 980" stroke="#8c8c8c" strokeWidth="9" />
      <path d="M855 610L695 985" stroke="#9a9a9a" strokeWidth="13" />
      <path d="M860 800L700 985" stroke="#909090" strokeWidth="8" />
      <path d="M815 730L880 830M420 640L280 860M470 725L395 815" stroke="#9c9c9c" strokeWidth="3" />
      <path d="M395 610C430 720 340 880 280 900C260 895 270 870 320 840L470 725" fill="none" stroke="#8a8a8a" strokeWidth="6" />
      <path d="M470 745C465 800 430 835 415 825C400 810 410 770 425 760" fill="none" stroke="#8a8a8a" strokeWidth="6" />
      <path d="M860 650C870 760 910 900 935 920C955 910 930 870 900 770" fill="none" stroke="#8d8d8d" strokeWidth="6" />

      <polygon points="582,978 672,990 672,1055 582,1040" fill="#7c7c7c" />
      <polygon points="672,990 798,982 798,1045 706,1055 672,1055" fill="#8f8f8f" />

      <polygon points="340,15 485,10 490,105 510,165 345,165 355,110" fill="#7f7f7f" />
      <polygon points="350,105 490,105 510,165 340,165" fill="#898989" />
      <polygon points="510,85 580,70 590,100 530,90 535,140 520,140" fill="#999" />
      <polygon points="485,165 630,110 790,70 880,0 905,135 520,180" fill="#8e8e8e" />
      <polygon points="320,170 520,178 640,735 515,720 410,560 375,445" fill="#777" />
      <rect x="355" y="445" width="235" height="115" rx="30" fill="url(#cyl)" transform="rotate(3 470 500)" />
      <path d="M410 548L590 562" stroke="#222" strokeWidth="2" />
      <polygon points="520,178 735,105 760,100 905,130 948,378 918,388 962,620 780,685 635,735" fill="#949494" />
      <path d="M735 105L800 425" stroke="#878787" strokeWidth="2" />

      <polygon points="355,565 405,545 400,600 150,1085 95,1090" fill="#8e8e8e" />
      <polygon points="355,565 405,545 400,590" fill="#9a9a9a" />
      <polygon points="92,1095 150,1095 118,1230" fill="#929292" />
      <circle cx="120" cy="1085" r="27" fill="url(#ball)" />
      <polygon points="855,555 890,575 905,600 1082,1110 1025,1120 860,610" fill="#919191" />
      <polygon points="855,555 890,575 860,600" fill="#989898" />
      <polygon points="1025,1125 1082,1130 1055,1265" fill="#939393" />
      <circle cx="1053" cy="1118" r="29" fill="url(#ball)" />
    </g>

    {/* hose on top of both halves */}
    <g transform="translate(980 260) scale(.33333)">
      <path d="M705 910C790 1040 840 1250 805 1410C795 1450 775 1455 765 1450" fill="none" stroke="#7a7a7a" strokeWidth="26" />
      <path d="M702 910C785 1040 832 1250 798 1410" fill="none" stroke="#9c9c9c" strokeWidth="14" />
      <polygon points="650,850 670,842 718,888 688,918 652,880" fill="#a4a4a4" />
      <path d="M775 1265L718 1460" stroke="#9c9c9c" strokeWidth="6" />
      <ellipse cx="760" cy="1355" rx="28" ry="38" fill="#8d8d8d" />
    </g>

    {/* axis marker and mouse pointer */}
    <text x="74" y="1184" textAnchor="middle" fontFamily="Liberation Sans, sans-serif" fontWeight="bold" fontSize="12" fill="#22e000">y</text>
    <text x="61" y="1194" textAnchor="middle" fontFamily="Liberation Sans, sans-serif" fontWeight="bold" fontSize="12" fill="#e00000">x</text>
    <text x="66" y="1194" textAnchor="middle" fontFamily="Liberation Sans, sans-serif" fontWeight="bold" fontSize="12" fill="#0000e0">z</text>
    <path d="M75 1200V1184" stroke="#22e000" strokeWidth="1" />
    <path d="M75 1200H68" stroke="#0000c0" strokeWidth="1" />
    <path d="M68 1200H63" stroke="#c00000" strokeWidth="1" />
    <rect x="2059" y="760" width="10" height="8" fill="#ddd" stroke="#222" />
    <path d="M2066 763L2066 776L2069 773L2072 778L2074 777L2071 772L2075 772Z" fill="#fff" stroke="#111" strokeWidth="1" />
  </>
);

const ticks = [];
for (let f = 2; f <= 120; f += 2) ticks.push(f);

export default function App() {
  return (
    <Page>
      <Global />
      <TitleBar>
        <AppLogo><MayaM w={16} h={18} id="mayaSmall" /></AppLogo>
        <TitleText>Autodesk Maya 2018 - Educational Version: /home/ahj3/Documents/3D Modeling/Johnson_Ashley_primitive_robot_v2.mb*</TitleText>
        <WindowButtons>
          <Ico s={14} vb={14}><path d="M7 1L13 7H9.5V13H4.5V7H1Z" fill="#fff" stroke="#555" strokeWidth=".6" /></Ico>
          <Ico s={14} vb={14}><rect x="2" y="9" width="10" height="3" fill="#fff" stroke="#555" strokeWidth=".6" /></Ico>
          <Ico s={14} vb={14}><rect x="5" y="1.5" width="8" height="8" fill="none" stroke="#fff" strokeWidth="1.4" /><rect x="1.5" y="4.5" width="8" height="8" fill="#a4a4a4" stroke="#fff" strokeWidth="1.4" /></Ico>
          <Ico s={14} vb={14}><path d="M2 2L12 12M12 2L2 12" stroke="#fff" strokeWidth="2.6" /></Ico>
        </WindowButtons>
      </TitleBar>

      <MenuBar>
        {menus.map(m => <MenuItem key={m}>{m}</MenuItem>)}
        <WorkspaceBox>
          <WorkspaceLabel>Workspace :</WorkspaceLabel>
          <Drop $w={193} $h={19}>
            <DropText $c="#989898">Maya Classic*</DropText>
            <DropArrow />
          </Drop>
          <ShelfSlot $marked $w={21} $h={23} $ml={3}>
            <Ico s={16} vb={16}><rect x="2" y="7" width="12" height="9" rx="1" fill={W} /><path d="M4.5 7V4.5C4.5 1 11.5 1 11.5 4.5V7" fill="none" stroke={W} strokeWidth="1.6" /><circle cx="8" cy="11" r="1.5" fill={D} /></Ico>
          </ShelfSlot>
        </WorkspaceBox>
      </MenuBar>

      <StatusLine>
        <Drop $w={98} $h={20}>
          <DropText>Modeling</DropText>
          <DropArrow $w={18} />
        </Drop>
        <Sep $ml={10} />
        <Group $ml={9}>{statusFile.map((c, i) => <Slot key={i} $w={23.6} $h={22}>{c}</Slot>)}</Group>
        <Collapse $ml={5} />
        <Sep $ml={19} />
        <Group $ml={10}>{statusSel.map((c, i) => <Slot key={i} $w={23.5} $h={22} $on={i === 1}>{c}</Slot>)}</Group>
        <Collapse $ml={6} />
        <Sep $ml={19} />
        <Group $ml={16}>
          <Slot $w={22.5} $h={22}><Magnet><path d="M13 17H21M13 20H21M15 15V22M19 15V22" stroke={T} /></Magnet></Slot>
          <Slot $w={22.5} $h={22}><Magnet><path d="M15 15L21 21" stroke={T} strokeWidth="1.6" /></Magnet></Slot>
          <Slot $w={22.5} $h={22}><Magnet><circle cx="17" cy="18" r="2.5" fill={T} /></Magnet></Slot>
          <Slot $w={22.5} $h={22}><Magnet><circle cx="17" cy="4" r="1.8" fill="none" stroke={T} /><circle cx="17" cy="18" r="2" fill="none" stroke={T} /></Magnet></Slot>
          <Slot $w={22.5} $h={22}><Magnet><path d="M13 15L18 10L22 15L17 20Z" fill="none" stroke={T} /></Magnet></Slot>
          <Slot $w={22.5} $h={22}><Magnet /></Slot>
        </Group>
        <TinyDown $ml={4} />
        <OutlineBox $ml={5} $w={100}>No Live Surface</OutlineBox>
        <Sep $ml={12} />
        <TinyDown $ml={15} />
        <OutlineBox $ml={6} $w={99}>Symmetry: Off</OutlineBox>
        <Collapse $ml={7} />
        <Sep $ml={20} />
        <Group $ml={12}>{statusRender.map((c, i) => <Slot key={i} $w={23.5} $h={22}>{c}</Slot>)}</Group>
        <Collapse $ml={4} />
        <Sep $ml={19} />
        <RightIcons>
          {statusRight.map((c, i) => <Slot key={i} $w={23} $h={22}>{c}</Slot>)}
          <Slot $w={22} $h={21} $on><LayersGlyph /></Slot>
        </RightIcons>
      </StatusLine>

      <ShelfArea>
        <ShelfSide>
          <Ico s={12} vb={12}><path d="M1 4H11M1 8H11" stroke="#aaa" strokeWidth="2" /></Ico>
          <Ico s={12} vb={12}><circle cx="6" cy="6" r="3.6" fill="none" stroke="#aaa" strokeWidth="2" /><path d="M6 0V2M6 10V12M0 6H2M10 6H12" stroke="#aaa" strokeWidth="1.6" /></Ico>
        </ShelfSide>
        <ShelfMain>
          <TabStrip>
            {tabs.map(([t, w, on]) => <ShelfTab key={t} $w={w} $on={on}>{t}</ShelfTab>)}
          </TabStrip>
          <ShelfRow>
            {shelf.map((it, i) =>
              it === '|' ? (
                <ShelfSep key={i} />
              ) : (
                <ShelfSlot key={i} $marked={it[1]}>
                  <Ico>{shelfIcons[it[0]]}</Ico>
                  {it[2] && <CornerMark />}
                </ShelfSlot>
              )
            )}
          </ShelfRow>
        </ShelfMain>
        <ShelfScroll><Tri $up /><ScrollDot /><Tri /></ShelfScroll>
      </ShelfArea>

      <Middle>
        <Toolbox>
          <ToolSlot $mt={0}><Ico s={28} vb={28}><path d="M7 1L24 18H15L20 28H16L11 19L7 24Z" fill={W} /></Ico></ToolSlot>
          <ToolSlot><Ico s={32} vb={32}><ellipse cx="13" cy="13" rx="10" ry="8" transform="rotate(-30 13 13)" fill="none" stroke={T} strokeWidth="2.2" strokeDasharray="5 3" /><path d="M15 8L28 22H21L25 31H22L18 23L15 27Z" fill={W} /></Ico></ToolSlot>
          <ToolSlot><Ico s={32} vb={32}><ellipse cx="14" cy="20" rx="11" ry="8" transform="rotate(20 14 20)" fill="none" stroke={T} strokeWidth="2.2" strokeDasharray="5 3" /><path d="M29 2L16 16C12 18 10 19 8 20C12 21 16 21 18 18L31 5Z" fill={W} /></Ico></ToolSlot>
          <ToolSlot $on><Ico s={32} vb={32}><rect x="10" y="10" width="12" height="12" fill={W} stroke="#333" /><path d="M16 2L20 6H12ZM16 30L20 26H12ZM2 16L6 12V20ZM30 16L26 12V20Z" fill="none" stroke={T} strokeWidth="1.4" /></Ico></ToolSlot>
          <ToolSlot><Ico s={32} vb={32}><path d="M28 10A14 14 0 1 0 14 30" fill="none" stroke={T} strokeWidth="1.6" /><path d="M27 15L32 15L29 19Z" fill={T} /><path d="M16 7L25 16L16 25L7 16Z" fill={W} /></Ico></ToolSlot>
          <ToolSlot $mb={37}><Ico s={30} vb={30}><rect x="3" y="3" width="24" height="24" fill="none" stroke={T} strokeWidth="1.2" strokeDasharray="3.5 2" /><path d="M12 14H20V20" fill="none" stroke={T} strokeWidth="1.2" /><rect x="2" y="17" width="11" height="11" fill={W} /></Ico></ToolSlot>
          <ToolSlot $mt={0}><Ico s={26} vb={26}><path d="M3 5A10 4 0 0 1 23 5V21A10 4 0 0 1 3 21Z" fill={O} /><ellipse cx="13" cy="5" rx="7" ry="2.2" fill={D} /><path d="M3 11A10 4 0 0 0 23 11M3 16A10 4 0 0 0 23 16M13 9V25" stroke={D} strokeWidth="1.1" fill="none" /></Ico></ToolSlot>
          <ToolRule />
          <LayoutSlot><Ico s={30} vb={30}><rect x="1" y="1" width="28" height="28" fill={W} /><rect x="3" y="3" width="24" height="24" fill="#444" stroke={W} /><path d="M15 8L19 12L15 15L11 12ZM8 12L12 15L8 18L4 15ZM22 12L26 15L22 18L18 15ZM15 16L19 19L15 23L11 19Z" fill={W} /></Ico></LayoutSlot>
          <LayoutSlot><Ico s={30} vb={30}><rect x="1" y="1" width="13" height="13" fill="none" stroke={W} /><rect x="16" y="1" width="13" height="13" fill={W} /><rect x="1" y="16" width="13" height="13" fill="none" stroke={W} /><rect x="16" y="16" width="13" height="13" fill="none" stroke={W} /><path d="M4 7.5H11M7.5 4V11M4 22.5H11M7.5 19V26M19 22.5H26M22.5 19V26" stroke={W} /><path d="M22.5 5L27 7.5L22.5 10L18 7.5Z" fill="#444" /></Ico></LayoutSlot>
          <LayoutSlot><Ico s={30} vb={30}><rect x="1" y="1" width="13" height="28" fill="none" stroke={W} /><rect x="16" y="1" width="13" height="28" fill={W} /><path d="M4 15H11M7.5 11V19" stroke={W} /><path d="M22.5 12L27 15L22.5 18L18 15Z" fill="#444" /></Ico></LayoutSlot>
          <LayoutSlot><Ico s={30} vb={30}><rect x="1" y="1" width="28" height="28" fill="none" stroke={W} /><path d="M5 6H9V8H5ZM11 7H20M7 9V25M11 12H14V14H11ZM16 13H24M11 18H14V20H11ZM16 19H22M11 24H14V26H11ZM16 25H23M7 13H11M7 19H11M7 25H11" stroke={W} strokeWidth="1" fill={W} /></Ico></LayoutSlot>
          <LogoFoot><MayaM w={34} h={32} id="mayaFoot" /></LogoFoot>
        </Toolbox>

        <ViewPane>
          <PanelMenu>
            {['View', 'Shading', 'Lighting', 'Show', 'Renderer', 'Panels'].map(m => <MenuItem key={m} $gap={15.4}>{m}</MenuItem>)}
          </PanelMenu>
          <PanelTools>
            <Sep $w={3} $h={14} $mr={4} />
            {['cam', 'camLock', 'camGear', 'mark', 'grid2', 'move', 'pen'].map(n => <VP key={n} n={n} />)}
            <Sep $w={3} $h={14} $ml={4} $mr={4} />
            <VP n="grid" on /><VP n="film" /><VP n="dot" /><VP n="dotOff" sunken /><VP n="safe" /><VP n="res" /><VP n="textbox" />
            <Sep $w={3} $h={14} $ml={4} $mr={4} />
            <VP n="wire" /><VP n="shaded" on /><VP n="half" /><VP n="texBox" /><VP n="chk" /><VP n="bulb" /><VP n="ball" />
            <Sep $w={3} $h={14} $ml={4} $mr={4} />
            <VP n="shadow" /><VP n="ao" /><VP n="ring" /><VP n="blocks" sunken />
            <Sep $w={3} $h={14} $ml={4} $mr={4} />
            <VP n="xray" />
            <Sep $w={3} $h={14} $ml={4} $mr={3} />
            <VP n="squares" /><VP n="squares2" /><VP n="wand" />
            <Sep $w={3} $h={14} $ml={4} $mr={4} />
            <VP n="iris" />
            <NumField $w={38}>0.00</NumField>
            <Slot $w={23} $h={19}><Ico s={18} vb={18}>{vpIcons.gammaIco}</Ico></Slot>
            <NumField $w={37} $mr={4}>1.00</NumField>
            <VP n="on" on />
            <Drop $w={133} $h={16} $ml={4}>
              <DropText>sRGB gamma</DropText>
              <DropArrow $w={21} />
            </Drop>
          </PanelTools>
          <Canvas>
            <CanvasSvg width="2228" height="1036" viewBox="49 193 2228 1036">
              <Grid />
              <Robot />
            </CanvasSvg>
            <CameraName>persp</CameraName>
          </Canvas>
        </ViewPane>

        <Dock>
          <DockIcons>
            <Slot $w={21} $h={20}><Ico s={18} vb={18}><path d="M9 1L12 5H6Z" fill="#7fb04a" /><path d="M9 5V11M9 11L4 14M9 11L14 14" stroke={W} /><rect x="1" y="12" width="5" height="5" fill="#4a7fd8" /><rect x="12" y="12" width="5" height="5" fill="#d84a4a" /></Ico></Slot>
            <Slot $w={21} $h={20}><Ico s={18} vb={18}><path d="M2 15A7.5 7.5 0 1 1 16 15H12A3.5 3.5 0 1 0 6 15Z" fill={T} /><path d="M12 15H16A7 7 0 0 0 15.5 11L12 12Z" fill="#777" /></Ico></Slot>
            <Slot $w={21} $h={20}><Ico s={18} vb={18}><path d="M3 2V15H17" stroke="#888" fill="none" /><path d="M6 13L16 3" stroke={T} strokeWidth="2.6" /></Ico></Slot>
          </DockIcons>
          <DockMenu>
            <MenuItem $gap={16}>Channels</MenuItem>
            <MenuItem $gap={16}>Edit</MenuItem>
            <MenuItem $gap={16}>Object</MenuItem>
            <MenuItem>Show</MenuItem>
          </DockMenu>
          <DarkList $h={712} $m="0 0 0 1px" />
          <GripDots />
          <LayerTabs>
            <LayerTab $w={58} $on>Display</LayerTab>
            <LayerTab $w={47}>Anim</LayerTab>
          </LayerTabs>
          <LayerBody>
            <DockMenu>
              <MenuItem $gap={16}>Layers</MenuItem>
              <MenuItem $gap={16}>Options</MenuItem>
              <MenuItem>Help</MenuItem>
            </DockMenu>
            <LayerIcons>
              <Ico s={17} vb={17}><path d="M1 8L6 4L9 8L6 12Z" fill={W} /><path d="M5 8L9 4L11 8L9 12Z" fill={W} /><path d="M13 3L16 7H14V12H12V7H10Z" fill={T} /></Ico>
              <Ico s={17} vb={17}><path d="M1 8L6 4L9 8L6 12Z" fill={W} /><path d="M5 8L9 4L11 8L9 12Z" fill={W} /><path d="M13 13L16 9H14V4H12V9H10Z" fill={T} /></Ico>
              <Ico s={17} vb={17}><path d="M1 10L8 6L12 10L7 14Z" fill={W} /><path d="M12 2V9M9 5H15" stroke={T} strokeWidth="2" /></Ico>
              <Ico s={17} vb={17}><path d="M1 10L8 6L12 10L7 14Z" fill={W} /><circle cx="12" cy="5" r="3.4" fill={T} /></Ico>
            </LayerIcons>
            <DarkList $flex="1" />
            <HScroll>
              <ArrowSide $left />
              <HTrack><HThumb /></HTrack>
              <ArrowSide />
            </HScroll>
          </LayerBody>
        </Dock>
        <VTabs>
          <VTab $h={152} $pt={10} $on>Channel Box / Layer Editor</VTab>
          <VTab $h={101} $pt={12}>Modeling Toolkit</VTab>
          <VTab $h={90} $pt={12}>Attribute Editor</VTab>
        </VTabs>
      </Middle>

      <TimeRow>
        <Grip />
        <Ruler>
          <RulerNow>1</RulerNow>
          {ticks.map(f => (
            <Tick key={f}>
              <TickLabel>{f}</TickLabel>
              <TickMark />
            </Tick>
          ))}
        </Ruler>
        <Field $w={88} $h={18} $ml={7}>1</Field>
        <Group $ml={5}>
          {playback.map((c, i) => <Slot key={i} $w={23.2} $h={22}><Ico s={22} vb={22}>{c}</Ico></Slot>)}
        </Group>
      </TimeRow>

      <RangeRow>
        <Grip />
        <Field>1</Field>
        <Field $ml={8}>1</Field>
        <RangeTrack>
          <RangeBar>
            <RangeHandle $m="0 3px 0 0" />
            1
            <RangeEnd>120</RangeEnd>
            <RangeHandle $m="0" />
          </RangeBar>
        </RangeTrack>
        <Field $ml={662}>120</Field>
        <Field $ml={8}>200</Field>
        <Sep $h={22} $ml={5} />
        <TinyDown $ml={17} />
        <OutlineBox $ml={8} $w={101}>No Character Set</OutlineBox>
        <TinyDown $ml={12} />
        <OutlineBox $ml={8} $w={101}>No Anim Layer</OutlineBox>
        <Sep $h={22} $ml={10} />
        <Drop $w={95} $ml={11} $h={18}>
          <DropText>24 fps</DropText>
          <DropArrow />
        </Drop>
        <Slot $w={22} $h={22} $ml={11}><Ico s={20} vb={20}><path d="M3 11V7C3 5 5 4 7 4H15M12 1L16 4L12 7M17 9V13C17 15 15 16 13 16H5M8 13L4 16L8 19" fill="none" stroke={W} strokeWidth="1.8" /></Ico></Slot>
        <Sep $h={22} $ml={10} />
        <Slot $w={22} $h={22} $ml={11}><Ico s={20} vb={20}><circle cx="10" cy="10" r="8.5" fill="none" stroke={W} strokeWidth="1.4" strokeDasharray="10 2" /><path d="M10 3V17M4 10H16" stroke="#d9752f" strokeWidth="1.4" /></Ico></Slot>
        <Slot $w={22} $h={22} $ml={9}><Ico s={22} vb={22}><circle cx="4" cy="4" r="3" fill="none" stroke={W} strokeWidth="1.4" /><circle cx="13" cy="6" r="2.4" fill="#d9752f" /><path d="M13 9L9 13L13 16L9 21M13 10L18 13L21 12M9 13L6 16L2 15" stroke="#d9752f" strokeWidth="2" fill="none" /></Ico></Slot>
      </RangeRow>

      <CmdRow>
        <Grip />
        <MelLabel>MEL</MelLabel>
        <Field $w={739} $h={22} />
        <Field $w={1721} $h={22} $ml={7} />
        <Slot $w={20} $h={20} $ml={6}>
          <Ico s={19} vb={19}><rect x="0" y="0" width="19" height="19" fill={W} /><rect x="1" y="4" width="17" height="14" fill="#5a5a5a" /><text x="9.5" y="15" textAnchor="middle" fontFamily="Liberation Sans, sans-serif" fontSize="10" fill={W}>{'{;}'}</text></Ico>
        </Slot>
      </CmdRow>

      <HelpLine>
        <Grip />
        Move Tool: Select an object to move.
      </HelpLine>
    </Page>
  );
}
